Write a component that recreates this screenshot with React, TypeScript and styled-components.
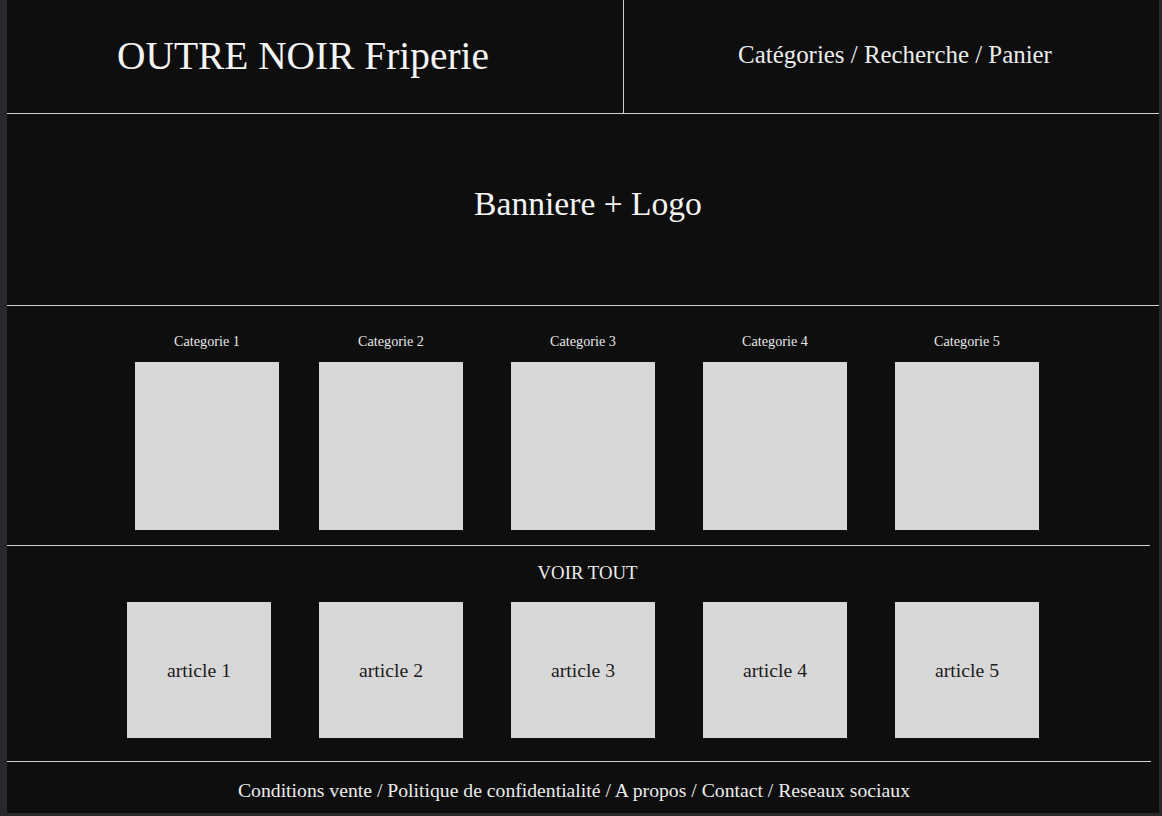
import React from "react";
import styled, { createGlobalStyle } from "styled-components";

const Global = createGlobalStyle`
  html, body {
    margin: 0;
    padding: 0;
    background: #29292d;
  }
  body {
    font-family: "Liberation Serif", "Times New Roman", serif;
  }
`;

const Canvas = styled.div`
  width: 1152px;
  height: 813px;
  margin: 0 3px 3px 7px;
  background: #0e0e0f;
  color: #f2f2f2;
  display: flex;
  flex-direction: column;
  overflow: hidden;
`;

const Header = styled.header`
  height: 113px;
  display: flex;
`;

const Brand = styled.div`
  width: 617px;
  border-right: 1px solid #cfcfcf;
  display: flex;
  align-items: center;
  padding-left: 110px;
  box-sizing: border-box;
  font-size: 39.4px;
  color: #f4f4f4;
  padding-bottom: 2px;
`;

const Nav = styled.nav`
  flex: 1;
  display: flex;
  align-items: center;
  justify-content: center;
  font-size: 24.9px;
  color: #ececec;
  padding-left: 7px;
  padding-bottom: 4px;
`;

const Rule = styled.div<{ $inset?: number }>`
  height: 1px;
  background: #cfcfcf;
  margin-right: ${(p) => p.$inset ?? 0}px;
  flex-shrink: 0;
`;

const Banner = styled.section`
  height: 191px;
  display: flex;
  align-items: center;
  justify-content: center;
  font-size: 33.6px;
  color: #f4f4f4;
  padding-left: 10px;
  padding-bottom: 12px;
  box-sizing: border-box;
`;

const CategorySection = styled.section`
  height: 239px;
  box-sizing: border-box;
  padding-top: 27px;
`;

const Grid = styled.div`
  display: grid;
  grid-template-columns: repeat(5, 144px);
  column-gap: 48px;
  justify-content: center;
`;

const Category = styled.div<{ $shift?: number }>`
  width: 144px;
  margin-left: ${(p) => p.$shift ?? 0}px;
  display: flex;
  flex-direction: column;
  align-items: center;
  gap: 12px;
`;

const CategoryLabel = styled.div`
  font-size: 14.2px;
  line-height: 17px;
  color: #e6e6e6;
`;

const Placeholder = styled.div<{ $h: number }>`
  width: 144px;
  height: ${(p) => p.$h}px;
  background: #d8d8d8;
  display: flex;
  align-items: center;
  justify-content: center;
  color: #1c1c1c;
  font-size: 19.7px;
`;

const ArticleSection = styled.section`
  height: 215px;
  box-sizing: border-box;
  padding-top: 16px;
  display: flex;
  flex-direction: column;
  gap: 18px;
`;

const SeeAll = styled.div`
  text-align: center;
  font-size: 18.8px;
  line-height: 22px;
  color: #ececec;
  padding-left: 9px;
`;

const Footer = styled.footer`
  flex: 1;
  display: flex;
  align-items: center;
  justify-content: center;
  font-size: 19.7px;
  color: #ececec;
  padding-right: 18px;
  padding-top: 6px;
`;

const categories = [1, 2, 3, 4, 5];

export default function App() {
  return (
    <>
      <Global />
      <Canvas>
        <Header>
          <Brand>OUTRE NOIR Friperie</Brand>
          <Nav>Catégories / Recherche / Panier</Nav>
        </Header>
        <Rule />
        <Banner>Banniere + Logo</Banner>
        <Rule />
        <CategorySection>
          <Grid>
            {categories.map((n) => (
              <Category key={n} $shift={n === 1 ? 8 : 0}>
                <CategoryLabel>Categorie {n}</CategoryLabel>
                <Placeholder $h={168} />
              </Category>
            ))}
          </Grid>
        </CategorySection>
        <Rule $inset={9} />
        <ArticleSection>
          <SeeAll>VOIR TOUT</SeeAll>
          <Grid>
            {categories.map((n) => (
              <Placeholder key={n} $h={136}>
                article {n}
              </Placeholder>
            ))}
          </Grid>
        </ArticleSection>
        <Rule $inset={8} />
        <Footer>
          Conditions vente / Politique de confidentialité / A propos / Contact / Reseaux sociaux
        </Footer>
      </Canvas>
    </>
  );
}
